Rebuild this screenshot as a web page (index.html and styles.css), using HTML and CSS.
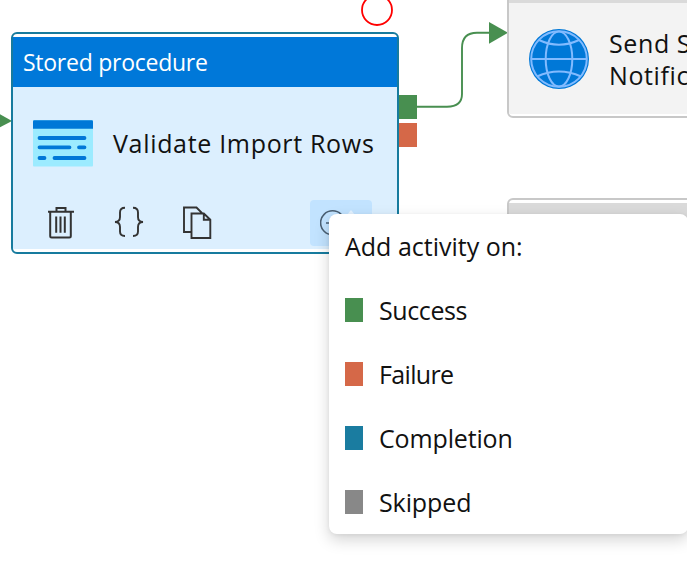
FILE: index.html
```html
<!DOCTYPE html>
<html lang="en">
<head>
<meta charset="utf-8">
<title>Pipeline canvas</title>
<link rel="stylesheet" href="styles.css">
</head>
<body>
<main class="canvas">
  <svg class="links" width="687" height="566" viewBox="0 0 687 566">
    <path d="M0 114.3 12 121 0 127.2Z" fill="#488f50"/>
    <path d="M416 106.7H447Q462 106.7 462 94V48Q462 32.7 477 32.7H490" fill="none" stroke="#488f50" stroke-width="1.9"/>
    <path d="M489 22 508 32.8 489 43.7Z" fill="#488f50"/>
    <circle cx="377" cy="10" r="15" fill="#fff" stroke="#f00" stroke-width="1.8"/>
  </svg>

  <section class="node node-procedure">
    <header class="node-title"><span class="t-title">Stored procedure</span></header>
    <div class="node-body">
      <div class="node-name">
        <svg width="60" height="47" viewBox="0 0 60 47">
          <rect width="60" height="46.5" rx="1" fill="#9cebff"/>
          <path d="M0 8.7V1.5Q0 .3 1.2.3H58.8Q60 .3 60 1.5V8.7Z" fill="#0078d7"/>
          <path d="M6.5 18H51.5M6.5 27.3H36.5M46 27.3H51.5M6.5 38H11.5M21.5 38H51.5" stroke="#0078d7" stroke-width="3.8" stroke-linecap="round"/>
        </svg>
        <span class="t-name">Validate Import Rows</span>
      </div>
      <div class="node-actions">
        <svg width="28" height="34" viewBox="0 0 28 34" fill="none" stroke="#333" stroke-width="2">
          <path d="M1 5.7H27M9.5 5V2H18.5V5M3.2 6V30Q3.2 31.5 4.7 31.5H22.3Q23.8 31.5 23.8 30V6M9.2 10.5V26.7M13.5 10.5V26.7M17.8 10.5V26.7"/>
        </svg>
        <svg class="braces" width="30" height="34" viewBox="0 0 30 34" fill="none" stroke="#333" stroke-width="1.9">
          <path d="M11 1.8Q6 1.8 6 6.5V11Q6 15.8 1 16Q6 16.2 6 21V25.5Q6 30 11 30M19 1.8Q24 1.8 24 6.5V11Q24 15.8 29 16Q24 16.2 24 21V25.5Q24 30 19 30"/>
        </svg>
        <svg class="copy" width="30" height="34" viewBox="0 0 30 34" fill="none" stroke="#333" stroke-width="1.9">
          <path d="M9.5 26H2V1.5H14.5L20.5 7.5H9.5V32H28.3V13.7L21.8 7.5H20.5M21.8 7.5V13.7H28.3"/>
        </svg>
        <div class="add">
          <svg width="46" height="34" viewBox="0 0 46 34" fill="none" stroke="#4a5f73" stroke-width="1.6">
            <circle cx="12.6" cy="14.8" r="12"/>
            <path d="M6 15H18M12.6 9V21"/>
            <path d="M27 7 31 2 35 7Z" fill="#e4f2ff" stroke="none"/>
          </svg>
        </div>
      </div>
    </div>
  </section>
  <div class="ports"><i class="swatch success"></i><i class="swatch failure"></i></div>

  <section class="node node-web">
    <header class="node-title"></header>
    <div class="node-body">
      <svg width="60" height="60" viewBox="0 0 60 60" fill="none" stroke="#82bbff" stroke-width="2">
        <circle cx="30" cy="30" r="30" fill="#0078d7" stroke="none"/>
        <circle cx="30" cy="30" r="27.8"/>
        <ellipse cx="30" cy="30" rx="13.3" ry="27.5"/>
        <path d="M2 30H58M10 11Q30 20.5 50 11M8 47.5Q30 37.5 52 47.5"/>
      </svg>
      <span class="t-web">Send Success<br>Notification</span>
    </div>
  </section>

  <section class="node node-next"><header class="node-title"></header></section>

  <aside class="menu">
    <h2 class="t-heading">Add activity on:</h2>
    <ul>
      <li><i class="swatch success"></i><span class="t-success">Success</span></li>
      <li><i class="swatch failure"></i><span class="t-failure">Failure</span></li>
      <li><i class="swatch completion"></i><span class="t-completion">Completion</span></li>
      <li><i class="swatch skipped"></i><span class="t-skipped">Skipped</span></li>
    </ul>
  </aside>
</main>
</body>
</html>
```
FILE: styles.css
```css
* { box-sizing: border-box; }
body { margin: 0; overflow: hidden; background: #fff; }
.canvas {
  position: relative;
  width: 687px;
  height: 566px;
  overflow: hidden;
  font-family: "Open Sans", "Noto Sans", sans-serif;
  font-size: 25px;
  font-weight: 400;
  color: #111;
}
svg { display: block; flex: none; }
span { white-space: nowrap; }
.links { position: absolute; left: 0; top: 0; }
.node {
  position: absolute;
  display: flex;
  flex-direction: column;
  padding-top: 2.5px;
  padding-bottom: 2.5px;
  border: 2px solid #c8c8c8;
  border-radius: 6px;
  background: #fff;
}
.node-title { flex: none; background: #dadada; }
.node-body { flex: 1; }

.node-procedure { left: 11px; top: 32px; width: 388px; height: 221.5px; border-color: #177b9e; }
.node-procedure .node-title {
  display: flex;
  align-items: center;
  height: 50.5px;
  padding-left: 10px;
  background: #0078d9;
  color: #fff;
  font-size: 23px;
  letter-spacing: -.26px;
}
.node-procedure .node-body { background: #dceffe; }
.node-name { display: flex; align-items: center; gap: 20px; height: 112px; padding-left: 20px; }
.t-name { margin-top: -1px; letter-spacing: .68px; }
.node-actions { display: flex; align-items: flex-start; height: 46px; padding: 0 25px 0 34px; margin-top: 1px; }
.node-actions > svg { margin-top: 6px; }
.braces { margin-left: 39px; }
.copy { margin-left: 38px; }
.add { width: 62px; height: 46px; margin-left: auto; padding: 8px 0 0 10px; border-radius: 4px; background: #c2e3ff; }

.ports { position: absolute; left: 399px; top: 95px; display: flex; flex-direction: column; gap: 4px; }
.swatch { display: block; flex: none; width: 18px; height: 24px; }
.success { background: #488f50; }
.failure { background: #d56848; }
.completion { background: #1a7ca0; }
.skipped { background: #888; }

.node-web { left: 507px; top: -60px; width: 390px; height: 178px; }
.node-web .node-title { height: 58.5px; }
.node-web .node-body { display: flex; align-items: center; gap: 20px; padding: 2px 0 0 20px; background: #f3f3f3; }
.t-web { line-height: 32px; letter-spacing: .6px; }
.node-next { left: 507px; top: 198px; width: 390px; height: 222px; }
.node-next .node-title { height: 50px; }

.menu {
  position: absolute;
  left: 329px;
  top: 214px;
  width: 359px;
  height: 320px;
  border-radius: 8px;
  background: #fff;
  box-shadow: 0 6px 15px rgba(0, 0, 0, .17), 0 1px 4px rgba(0, 0, 0, .06);
}
.menu h2 { margin: 0; padding: 1px 0 0 16px; font-size: 25px; font-weight: 400; line-height: 63px; }
.menu ul { margin: 0; padding: 0; list-style: none; }
.menu li { display: flex; align-items: center; gap: 16px; height: 64px; padding-left: 16px; }
.t-success { letter-spacing: -.4px; }
.t-failure { letter-spacing: -.65px; }
.t-completion { letter-spacing: -.15px; }
.t-skipped { letter-spacing: -.1px; }
```
